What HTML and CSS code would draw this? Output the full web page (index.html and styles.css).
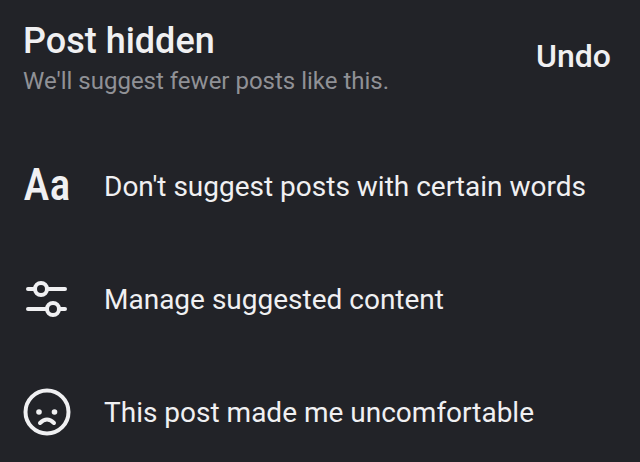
FILE: index.html
```html
<!DOCTYPE html>
<html lang="en">
<head>
<meta charset="utf-8">
<meta name="viewport" content="width=device-width, initial-scale=1">
<title>Post hidden</title>
<link rel="stylesheet" href="styles.css">
</head>
<body>
<main class="panel">
  <header class="header">
    <div class="heading">
      <h1 class="title">Post hidden</h1>
      <p class="subtitle">We'll suggest fewer posts like this.</p>
    </div>
    <button class="undo" type="button">Undo</button>
  </header>
  <ul class="options">
    <li>
      <button class="option" type="button">
        <span class="icon letters" aria-hidden="true">Aa</span>
        <span>Don't suggest posts with certain words</span>
      </button>
    </li>
    <li>
      <button class="option" type="button">
        <svg class="icon" viewBox="0 0 48 48" aria-hidden="true">
          <path d="M5 13H12M24 13H42M5 33H24M36 33H42"/>
          <circle cx="18" cy="13" r="6"/>
          <circle cx="30" cy="33" r="6"/>
        </svg>
        <span>Manage suggested content</span>
      </button>
    </li>
    <li>
      <button class="option" type="button">
        <svg class="icon" viewBox="0 0 48 48" aria-hidden="true">
          <circle cx="24" cy="23" r="21.500"/>
          <path d="M17 34Q24 27 31 34"/>
          <circle class="dot" cx="16" cy="23" r="2.800"/>
          <circle class="dot" cx="31.500" cy="23" r="2.800"/>
        </svg>
        <span>This post made me uncomfortable</span>
      </button>
    </li>
  </ul>
</main>
</body>
</html>
```
FILE: styles.css
```css
* {
  box-sizing: border-box;
}

body {
  margin: 0;
  min-height: 100vh;
  background: #222328;
  color: #f0f0f2;
  font-family: Roboto, "Liberation Sans", sans-serif;
}

button {
  border: 0;
  padding: 0;
  background: none;
  color: inherit;
  font-family: inherit;
  cursor: pointer;
}

.header {
  display: flex;
  align-items: center;
  justify-content: space-between;
  padding: 16px 29px 0 23px;
}

.title {
  margin: 0;
  font-size: 36px;
  line-height: 50px;
  font-weight: 500;
}

.subtitle {
  margin: 0;
  color: #909196;
  font-size: 24px;
  line-height: 30px;
}

.undo {
  font-size: 32px;
  line-height: 48px;
  font-weight: 500;
}

.options {
  margin: 34px 0 0;
  padding: 0;
  list-style: none;
}

.option {
  display: flex;
  align-items: center;
  gap: 33px;
  width: 100%;
  min-height: 113px;
  padding: 0 23px;
  font-size: 28px;
  line-height: 36px;
  text-align: left;
}

.icon {
  flex: none;
  width: 48px;
  height: 48px;
  overflow: visible;
  fill: none;
  stroke: currentColor;
  stroke-width: 4;
  stroke-linecap: round;
}

.dot {
  fill: currentColor;
  stroke: none;
}

.letters {
  font-family: "Roboto Condensed", Roboto, sans-serif;
  font-size: 44px;
  line-height: 44px;
  font-weight: 500;
  text-align: center;
}
```
